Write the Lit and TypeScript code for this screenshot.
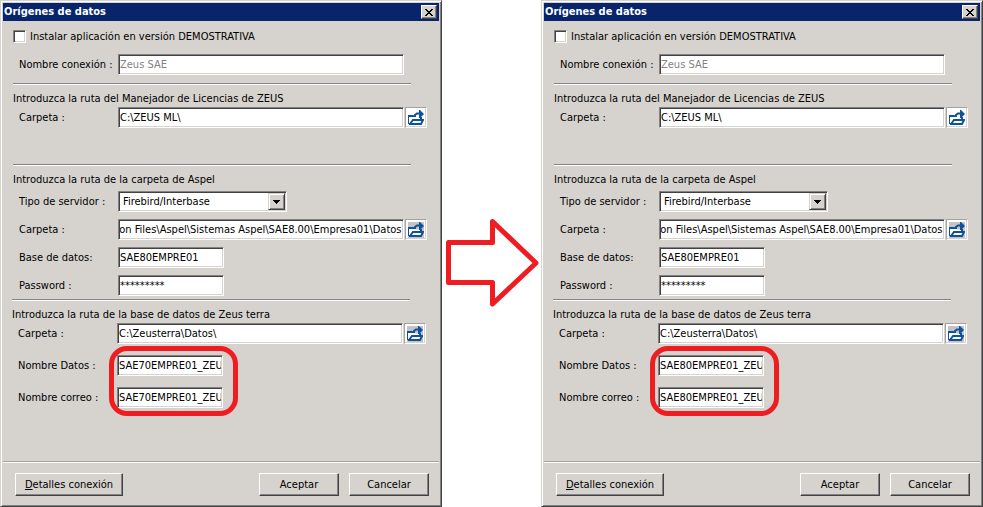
import { LitElement, html, svg, css } from "lit";
import { customElement, property } from "lit/decorators.js";

const folderIcon = svg`
  <svg viewBox="0 0 16 16" width="16" height="16" aria-hidden="true">
    <path d="M1 14V6H5L6 7" fill="none" stroke="#10519c" stroke-width="2"/>
    <path d="M1 7H6L14 8V9L13 14H1Z" fill="#ffffff"/>
    <path d="M1 14H13L15 10H5L2 14" fill="#ffffff" stroke="#10519c" stroke-width="2"/>
    <path d="M7 7V5L9 3.500H12M13 7V9" fill="none" stroke="#10519c" stroke-width="2"/>
    <path d="M11 0H12L16 4L12 8H11Z" fill="#10519c"/>
  </svg>`;

@customElement("data-dialog")
export class DataDialog extends LitElement {
  @property() database = "";

  static styles = css`
    :host {
      display: flex;
      flex-direction: column;
      box-sizing: border-box;
      min-width: 0;
      min-height: 100vh;
      padding: 1px;
      background: #d6d3ce;
      border: 1px solid;
      border-color: #d6d3ce #424142 #424142 #d6d3ce;
      box-shadow: inset 1px 1px #ffffff, inset -1px -1px #848284;
      font: 11px/14px Tahoma, "DejaVu Sans Condensed", "DejaVu Sans", sans-serif;
      color: #000000;
    }
    * { box-sizing: border-box; }
    input, select, button { font: inherit; color: inherit; margin: 0; border-radius: 0; }
    .title {
      display: flex;
      align-items: center;
      justify-content: space-between;
      height: 18px;
      margin: 1px 1px 0;
      padding: 0 2px 0 1px;
      background: #08246b;
      color: #ffffff;
    }
    h1 { margin: 0; font-size: 11px; line-height: 14px; font-weight: bold; }
    h2 { margin: 0; padding: 7px 0 1px; font-size: 11px; line-height: 14px; font-weight: normal; white-space: nowrap; }
    button {
      padding: 0;
      background: #d6d3ce;
      border: 1px solid;
      border-color: #ffffff #424142 #424142 #ffffff;
      box-shadow: inset -1px -1px #848284;
    }
    .close { display: flex; align-items: center; justify-content: center; width: 16px; height: 14px; color: #000000; }
    form { display: flex; flex-direction: column; flex: 1; margin: 0; }
    .section { padding: 0 13px 0 11px; }
    .intro { padding-top: 7px; }
    .terra { padding: 0 14px 0 10px; }
    .rule { height: 2px; margin: 0 16px 0 0; border: 0; border-top: 1px solid #848284; border-bottom: 1px solid #ffffff; }
    .check { display: flex; align-items: center; gap: 4px; height: 17px; margin-bottom: 9px; }
    .check input { appearance: none; width: 13px; height: 13px; }
    .row { display: grid; grid-template-columns: 105px minmax(0, 1fr) 22px; column-gap: 1px; align-items: center; }
    .row > label { padding: 1px 0 0 6px; white-space: nowrap; }
    .row > input, .select { margin-left: -1px; }
    input, select {
      min-width: 0;
      height: 21px;
      padding: 0 1px 1px;
      background: #ffffff;
      border: 1px solid;
      border-color: #848284 #ffffff #ffffff #848284;
      box-shadow: inset 1px 1px #424142, inset -1px -1px #d6d3ce;
      outline: 0;
    }
    input:disabled { color: #848284; }
    .short { width: 106px; }
    .select { position: relative; display: flex; width: 169px; }
    select { appearance: none; width: 100%; padding: 0 18px 0 4px; }
    .drop {
      position: absolute;
      top: 2px;
      right: 2px;
      bottom: 2px;
      display: flex;
      align-items: center;
      justify-content: center;
      width: 17px;
      background: #d6d3ce;
      border: 1px solid;
      border-color: #d6d3ce #424142 #424142 #d6d3ce;
      box-shadow: inset 1px 1px #ffffff, inset -1px -1px #848284;
      pointer-events: none;
    }
    .browse {
      display: flex;
      align-items: center;
      justify-content: center;
      width: 22px;
      height: 21px;
      background: #ffffff;
      border-color: #a5a2a5 #ffffff #ffffff #a5a2a5;
      box-shadow: inset -1px -1px #d6d3ce;
    }
    .server .browse svg, .terra .browse svg { background: #c6c3c6; }
    .licence { margin-bottom: 36px; }
    .name { margin-bottom: 8px; }
    .server { display: grid; row-gap: 7px; padding: 3px 0; }
    .names { position: relative; display: grid; row-gap: 11px; margin-top: 11px; }
    .mark {
      position: absolute;
      top: -9px;
      left: 97px;
      width: 129px;
      height: 70px;
      border: 5px solid #ef1c21;
      border-radius: 18px;
      pointer-events: none;
    }
    footer {
      display: flex;
      gap: 10px;
      margin: auto 1px 1px;
      padding: 10px 10px 8px 12px;
      border-top: 1px solid #a5a294;
      box-shadow: inset 0 1px #ffffff;
    }
    footer button { width: 80px; height: 23px; margin-top: 1px; white-space: nowrap; }
    footer .details { width: 108px; margin-right: auto; }
  `;

  firstUpdated() {
    const path = this.renderRoot.querySelector<HTMLInputElement>("#aspel");
    if (path) path.scrollLeft = path.scrollWidth;
  }

  private browse() {
    return html`<button class="browse" type="button" aria-label="Examinar">${folderIcon}</button>`;
  }

  render() {
    return html`
      <header class="title">
        <h1>Orígenes de datos</h1>
        <button class="close" type="button" aria-label="Cerrar">
          <svg width="8" height="7" viewBox="0 0 8 7" shape-rendering="crispEdges" aria-hidden="true">
            <path d="M0 0h2v1h1v1h2V1h1V0h2v1H7v1H6v1H5v1h1v1h1v1h1v1H6V6H5V5H3v1H2v1H0V6h1V5h1V4h1V3H2V2H1V1H0z"/>
          </svg>
        </button>
      </header>
      <form>
        <div class="section intro">
          <label class="check"><input type="checkbox">Instalar aplicación en versión DEMOSTRATIVA</label>
          <div class="row name">
            <label for="name">Nombre conexión :</label>
            <input id="name" value="Zeus SAE" disabled>
          </div>
          <hr class="rule">
          <h2>Introduzca la ruta del Manejador de Licencias de ZEUS</h2>
          <div class="row licence">
            <label for="licence">Carpeta :</label>
            <input id="licence" value="C:\\ZEUS ML\\">
            ${this.browse()}
          </div>
        </div>
        <div class="section">
          <hr class="rule">
          <h2>Introduzca la ruta de la carpeta de Aspel</h2>
          <div class="server">
            <div class="row">
              <label for="type">Tipo de servidor :</label>
              <span class="select">
                <select id="type"><option>Firebird/Interbase</option></select>
                <span class="drop">
                  <svg width="7" height="4" viewBox="0 0 7 4" shape-rendering="crispEdges" aria-hidden="true">
                    <path d="M0 0h7v1H6v1H5v1H4v1H3V3H2V2H1V1H0z"/>
                  </svg>
                </span>
              </span>
            </div>
            <div class="row">
              <label for="aspel">Carpeta :</label>
              <input id="aspel" value="Common Files\\Aspel\\Sistemas Aspel\\SAE8.00\\Empresa01\\Datos">
              ${this.browse()}
            </div>
            <div class="row">
              <label for="base">Base de datos:</label>
              <input id="base" class="short" value="SAE80EMPRE01">
            </div>
            <div class="row">
              <label for="password">Password :</label>
              <input id="password" class="short" value="*********" autocomplete="off">
            </div>
          </div>
        </div>
        <div class="section terra">
          <hr class="rule">
          <h2>Introduzca la ruta de la base de datos de Zeus terra</h2>
          <div class="row">
            <label for="terra">Carpeta :</label>
            <input id="terra" value="C:\\Zeusterra\\Datos\\">
            ${this.browse()}
          </div>
          <div class="names">
            <div class="row">
              <label for="data">Nombre Datos :</label>
              <input id="data" class="short" .value=${this.database}>
            </div>
            <div class="row">
              <label for="mail">Nombre correo :</label>
              <input id="mail" class="short" .value=${this.database}>
            </div>
            <div class="mark"></div>
          </div>
        </div>
        <footer>
          <button class="details" type="button"><u>D</u>etalles conexión</button>
          <button type="button">Aceptar</button>
          <button type="button">Cancelar</button>
        </footer>
      </form>
    `;
  }
}

@customElement("app-root")
export class AppRoot extends LitElement {
  static styles = css`
    :host {
      display: grid;
      grid-template-columns: minmax(0, 1fr) 99px minmax(0, 1fr);
      min-height: 100vh;
      background: #ffffff;
    }
    .arrow { display: block; margin-top: 217px; }
  `;

  render() {
    return html`
      <data-dialog database="SAE70EMPRE01_ZEU"></data-dialog>
      <svg class="arrow" width="99" height="92" viewBox="0 0 99 92" role="img" aria-label="Cambia a">
        <path d="M6.500 25.500H50.500V4.500L94 46L50.500 87V65.500H6.500Z" fill="none" stroke="#ef1c21" stroke-width="5" stroke-linejoin="round"/>
      </svg>
      <data-dialog database="SAE80EMPRE01_ZEU"></data-dialog>
    `;
  }
}
